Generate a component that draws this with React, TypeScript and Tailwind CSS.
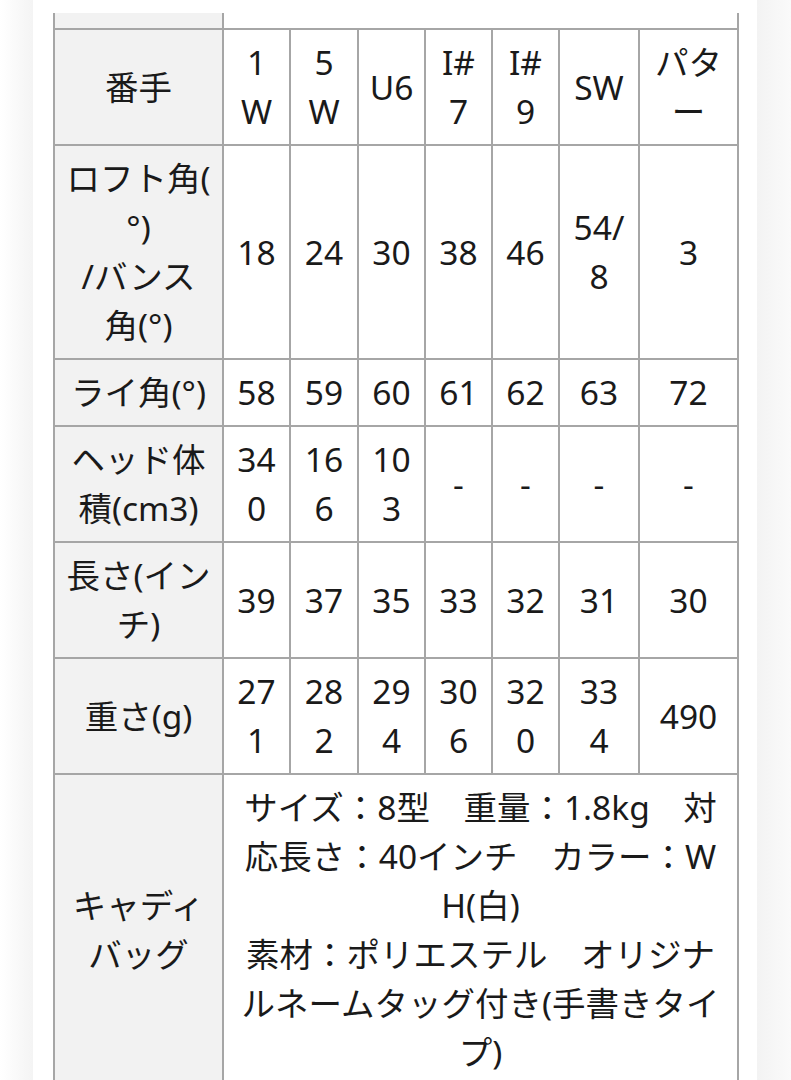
import React from "react"

type Row = {
  head: string[]
  cells: string[][]
}

// each inner array is one cell, each string one rendered line
const rows: Row[] = [
  {
    head: ["番手"],
    cells: [["1", "W"], ["5", "W"], ["U6"], ["I#", "7"], ["I#", "9"], ["SW"], ["パタ", "ー"]],
  },
  {
    head: ["ロフト角(", "°)", "/バンス", "角(°)"],
    cells: [["18"], ["24"], ["30"], ["38"], ["46"], ["54/", "8"], ["3"]],
  },
  {
    head: ["ライ角(°)"],
    cells: [["58"], ["59"], ["60"], ["61"], ["62"], ["63"], ["72"]],
  },
  {
    head: ["ヘッド体", "積(cm3)"],
    cells: [["34", "0"], ["16", "6"], ["10", "3"], ["-"], ["-"], ["-"], ["-"]],
  },
  {
    head: ["長さ(イン", "チ)"],
    cells: [["39"], ["37"], ["35"], ["33"], ["32"], ["31"], ["30"]],
  },
  {
    head: ["重さ(g)"],
    cells: [["27", "1"], ["28", "2"], ["29", "4"], ["30", "6"], ["32", "0"], ["33", "4"], ["490"]],
  },
]

const bagLines = [
  "サイズ：8型　重量：1.8kg　対",
  "応長さ：40インチ　カラー：W",
  "H(白)",
  "素材：ポリエステル　オリジナ",
  "ルネームタッグ付き(手書きタイ",
  "プ)",
]

function Lines({ lines }: { lines: string[] }) {
  return (
    <>
      {lines.map((l, i) => (
        <div key={i} className="whitespace-nowrap">
          {l}
        </div>
      ))}
    </>
  )
}

export default function App() {
  const th = "border-2 border-[#a6a6a6] bg-[#f2f2f2] px-1 py-2 text-center align-middle font-normal"
  const td = "border-2 border-[#a6a6a6] bg-white px-0 py-2 text-center align-middle"

  return (
    <div
      className="flex min-h-[1080px] bg-white text-[33.5px] leading-[49px] text-[#1a1a1a]"
      style={{ fontFamily: '"Noto Sans", "Noto Sans CJK JP", sans-serif' }}
    >
      <div className="w-[33px] shrink-0 bg-gradient-to-r from-white to-[#f4f4f4]" />
      <div className="w-[724px] shrink-0 overflow-hidden bg-white pt-[13px] pl-[20px]">
        <table className="w-[684px] table-fixed border-collapse">
          <colgroup>
            <col className="w-[169px]" />
            <col className="w-[67px]" />
            <col className="w-[68px]" />
            <col className="w-[67px]" />
            <col className="w-[67px]" />
            <col className="w-[67px]" />
            <col className="w-[80px]" />
            <col className="w-[99px]" />
          </colgroup>
          <tbody>
            <tr className="h-[16px]">
              <th className="border-2 border-t-0 border-[#a6a6a6] bg-[#f2f2f2] p-0" />
              <td colSpan={7} className="border-2 border-t-0 border-[#a6a6a6] bg-white p-0" />
            </tr>
            {rows.map((r, i) => (
              <tr key={i}>
                <th className={th}>
                  <Lines lines={r.head} />
                </th>
                {r.cells.map((c, j) => (
                  <td key={j} className={td}>
                    <Lines lines={c} />
                  </td>
                ))}
              </tr>
            ))}
            <tr>
              <th className={th}>
                <Lines lines={["キャディ", "バッグ"]} />
              </th>
              <td colSpan={7} className={td}>
                <Lines lines={bagLines} />
              </td>
            </tr>
          </tbody>
        </table>
      </div>
      <div className="flex-1 bg-gradient-to-r from-[#f3f3f3] to-[#fafafa]" />
    </div>
  )
}
